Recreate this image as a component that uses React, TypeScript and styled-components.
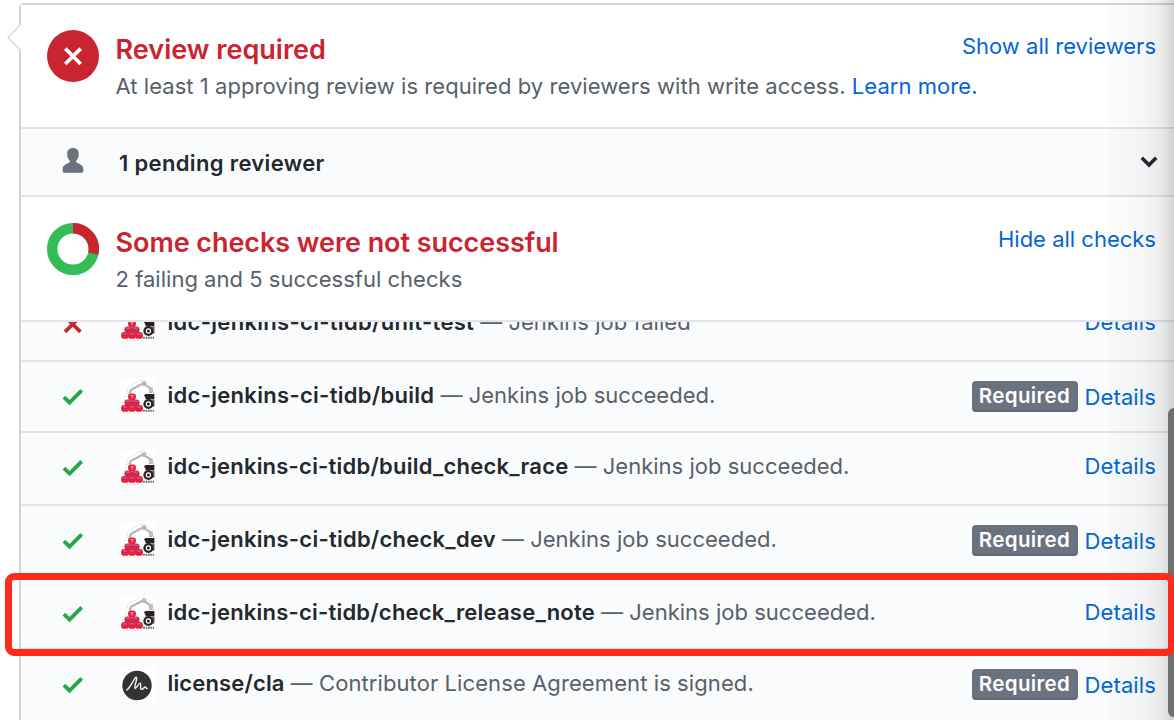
import React from "react";
import styled, { createGlobalStyle } from "styled-components";

const GlobalStyle = createGlobalStyle`
  * { box-sizing: border-box; }
  body { margin: 0; background: #fff; overflow: hidden; }
`;

const Page = styled.main`
  position: relative;
  width: 1174px;
  height: 720px;
  overflow: hidden;
  padding: 3px 0 0 19px;
  background: #fff;
  font-family: Inter, "Liberation Sans", sans-serif;
  font-size: 22px;
  line-height: 32px;
  color: #24292e;
`;

const Card = styled.section`
  height: 740px;
  border: 2px solid #d1d5da;
  border-right: 0;
  border-radius: 5px 0 0 0;
`;

const CardArrow = styled.svg`
  position: absolute;
  left: 6px;
  top: 22px;
`;

const StatusSection = styled.header<{ $height: number; $top: number }>`
  display: flex;
  height: ${(p) => p.$height}px;
  padding: ${(p) => p.$top}px 18px 0 26px;
  border-bottom: 2px solid #e1e4e8;
  background: #fff;
`;

const StatusBadge = styled.svg`
  flex: none;
`;

const StatusText = styled.div`
  flex: 1;
  min-width: 0;
  margin-left: 16.5px;
  padding-top: 1px;
  white-space: nowrap;
`;

const Title = styled.h2<{ $spacing: number }>`
  margin: 0;
  font-size: 27px;
  line-height: 38px;
  font-weight: 600;
  letter-spacing: ${(p) => p.$spacing}px;
  color: #cb2431;
`;

const Subtitle = styled.p<{ $spacing: number }>`
  margin: 1px 0 0;
  line-height: 32px;
  letter-spacing: ${(p) => p.$spacing}px;
  color: #586069;
`;

const Link = styled.a`
  color: #0366d6;
  white-space: nowrap;
`;

const DetailsLink = styled(Link)`
  letter-spacing: 0.12px;
`;

const PendingRow = styled.div`
  display: flex;
  align-items: center;
  height: 68px;
  padding: 0 16px 0 41px;
  border-bottom: 2px solid #e1e4e8;
  background: #fafbfc;
`;

const PersonIcon = styled.svg`
  flex: none;
  margin-bottom: 2px;
`;

const PendingLabel = styled.strong`
  flex: 1;
  margin: 1px 0 0 35px;
  font-weight: 600;
  letter-spacing: 0.35px;
`;

const CheckList = styled.div`
  height: 400px;
  overflow: hidden;
  background: #fafbfc;
`;

const CheckTrack = styled.div`
  margin-top: -33px;
`;

const CheckRow = styled.div<{ $height: number }>`
  display: flex;
  align-items: flex-start;
  height: ${(p) => p.$height}px;
  padding: 17px 18px 0 41px;
  border-bottom: 2px solid #e1e4e8;
`;

const StateIcon = styled.svg`
  flex: none;
  margin-top: 8px;
`;

const Avatar = styled.svg`
  flex: none;
  margin: 0 12.5px 0 36px;
`;

const CheckText = styled.div`
  flex: 1;
  display: flex;
  white-space: pre;
`;

const CheckName = styled.strong<{ $spacing: number }>`
  font-weight: 600;
  letter-spacing: ${(p) => p.$spacing}px;
`;

const CheckDescription = styled.span<{ $spacing: number }>`
  margin-left: 6px;
  color: #586069;
  letter-spacing: ${(p) => p.$spacing}px;
`;

const RowActions = styled.div<{ $required?: boolean }>`
  display: flex;
  align-items: flex-start;
  gap: 7px;
  padding-top: ${(p) => (p.$required ? 2 : 0)}px;
`;

const RequiredBadge = styled.span`
  width: 106px;
  height: 31px;
  text-align: center;
  border-radius: 4px;
  background: #6a737d;
  box-shadow: inset 0 -2px 0 rgba(27, 31, 35, 0.12);
  color: #fff;
  font-size: 20.5px;
  letter-spacing: 0.35px;
  line-height: 29px;
  font-weight: 600;
`;

const EdgeShadow = styled.div`
  position: absolute;
  top: 0;
  right: 0;
  width: 66px;
  height: 720px;
  background: linear-gradient(to right, rgba(0, 0, 0, 0.008), rgba(0, 0, 0, 0.03) 50%, rgba(0, 0, 0, 0.07) 80%, rgba(0, 0, 0, 0.17));
`;

const ScrollThumb = styled.div`
  position: absolute;
  left: 1168px;
  top: 408px;
  width: 12px;
  height: 309px;
  border-radius: 6px;
  background: #707070;
`;

const Highlight = styled.div`
  position: absolute;
  left: 5px;
  top: 573px;
  width: 1170px;
  height: 83px;
  border: 7px solid #ff2a1c;
  border-radius: 9px;
`;

const FailBadge = () => (
  <StatusBadge width="52" height="52" viewBox="0 0 52 52">
    <circle cx="26" cy="26" r="26" fill="#cb2431" />
    <path d="M18.3 18.6L33.7 34M33.7 18.6L18.3 34" stroke="#fff" strokeWidth="3.7" />
  </StatusBadge>
);

const Donut = () => (
  <StatusBadge width="52" height="52" viewBox="0 0 52 52">
    <circle cx="26" cy="26" r="20.8" fill="none" stroke="#34bd56" strokeWidth="10.4" />
    <path d="M26 5.2A20.8 20.8 0 0 1 46.3 30.6" fill="none" stroke="#cb2431" strokeWidth="10.4" />
  </StatusBadge>
);

const Person = () => (
  <PersonIcon width="22" height="26" viewBox="0 0 22 26">
    <path
      d="M11 0C7.4 0 5.2 2.2 5.2 5.8c0 3.1 1 5.6 2.7 7.1v1.4c-3 1.6-7.2 2.6-7.2 7V23c0 1.2.6 1.8 1.8 1.8h17c1.2 0 1.8-.6 1.8-1.8v-1.7c0-4.4-4.2-5.4-7.2-7v-1.4c1.7-1.5 2.7-4 2.7-7.1C16.8 2.2 14.6 0 11 0z"
      fill="#6a737d"
    />
  </PersonIcon>
);

const Chevron = () => (
  <svg width="18" height="14" viewBox="0 0 18 14">
    <path d="M1.8 2.8L9 10L16.2 2.8" fill="none" stroke="#24292e" strokeWidth="3.5" />
  </svg>
);

const Check = () => (
  <StateIcon width="22" height="20" viewBox="0 0 22 20">
    <path d="M1.9 10.2L7.6 15.7L19.7 3.4" fill="none" stroke="#28a745" strokeWidth="3.8" />
  </StateIcon>
);

const Cross = () => (
  <StateIcon width="22" height="20" viewBox="0 0 22 20">
    <path d="M3 2.5L18.4 17.9M18.4 2.5L3 17.9" fill="none" stroke="#cb2431" strokeWidth="3.7" />
  </StateIcon>
);

const barrels = [
  [12, 17.8],
  [8.4, 23.8],
  [15.6, 23.8],
  [5, 29.4],
  [12, 29.4],
  [19, 29.4],
];

const JenkinsAvatar = () => (
  <Avatar width="35" height="35" viewBox="0 0 35 35">
    <rect width="35" height="35" rx="4" fill="#fff" />
    <path d="M2 25L6.5 15L8 8L19 2L24 0.7L29 4L34 9M3 34.3H22" fill="none" stroke="#d0d0d0" strokeWidth=".8" strokeDasharray="2 1.5" />
    <path d="M9.5 14.5L11 10.8L23 4.5L31 9.5V14" fill="none" stroke="#b3b5b7" strokeWidth="2.2" />
    <circle cx="24" cy="4.6" r="2.3" fill="#b8b8b8" />
    <circle cx="31" cy="10.8" r="2.2" fill="#b8b8b8" />
    <path d="M28.5 14.5L31 11L34 14.5" fill="none" stroke="#c4c4c4" strokeWidth="1.2" />
    {barrels.map(([x, y]) => (
      <g key={`${x}-${y}`}>
        <rect x={x - 3.9} y={y - 3.3} width="7.8" height="6.6" rx="2.8" fill="#e6213d" />
        {y > 20 && <ellipse cx={x} cy={y - 1.6} rx="2.4" ry=".9" fill="#8b6fae" />}
      </g>
    ))}
    <path d="M10.6 16.7h3M12.2 16.7v2.8" stroke="#f7a5b0" strokeWidth=".9" />
    <path d="M24 16l2-1h8.4v5.200h-8.400z" fill="#2c2321" />
    <path d="M31.5 20.5h3v7h-3z" fill="#6b625e" />
    <circle cx="28.400" cy="25" r="3.900" fill="#fff" stroke="#2c2321" strokeWidth="2.400" />
    <circle cx="28.400" cy="25" r="1.500" fill="#2c2321" />
    <path d="M23 31.800H34" stroke="#756d6a" strokeWidth="2" strokeDasharray="1.800 .7" />
  </Avatar>
);

const ClaAvatar = () => (
  <Avatar width="35" height="35" viewBox="0 0 35 35">
    <rect width="35" height="35" rx="4" fill="#fff" />
    <circle cx="17" cy="18.5" r="14.7" fill="#333" />
    <path
      d="M6.8 23C10 20.5 12.5 15 15.2 10.8C16.9 9 17 11.5 16 15C14.9 18.5 14.4 21.5 15.2 21.5C16.6 21.5 18.8 15.7 20.3 16.2C21.5 16.8 19.5 22.4 21.5 22.4C23.5 22.5 23.8 19.9 25 20C26 20.1 25.6 21.7 27.2 21.4"
      fill="none"
      stroke="#f4f4f4"
      strokeWidth="1.4"
      strokeLinecap="round"
    />
  </Avatar>
);

interface CheckItem {
  name: string;
  description: string;
  height: number;
  nameSpacing: number;
  descriptionSpacing: number;
  failed?: boolean;
  required?: boolean;
  cla?: boolean;
}

const checks: CheckItem[] = [
  { name: "idc-jenkins-ci-tidb/unit-test", description: "Jenkins job failed", height: 73, nameSpacing: 0.31, descriptionSpacing: 0.02, failed: true },
  { name: "idc-jenkins-ci-tidb/build", description: "Jenkins job succeeded.", height: 71, nameSpacing: 0.3, descriptionSpacing: 0.02, required: true },
  { name: "idc-jenkins-ci-tidb/build_check_race", description: "Jenkins job succeeded.", height: 73, nameSpacing: 0.23, descriptionSpacing: 0.02 },
  { name: "idc-jenkins-ci-tidb/check_dev", description: "Jenkins job succeeded.", height: 73, nameSpacing: 0.25, descriptionSpacing: 0.02, required: true },
  { name: "idc-jenkins-ci-tidb/check_release_note", description: "Jenkins job succeeded.", height: 71, nameSpacing: 0.22, descriptionSpacing: 0.02 },
  { name: "license/cla", description: "Contributor License Agreement is signed.", height: 73, nameSpacing: 0.15, descriptionSpacing: 0.09, required: true, cla: true },
];

export default function App() {
  return (
    <Page>
      <GlobalStyle />
      <Card>
        <StatusSection $height={124} $top={25}>
          <FailBadge />
          <StatusText>
            <Title $spacing={0.02}>Review required</Title>
            <Subtitle $spacing={0.055}>
              At least 1 approving review is required by reviewers with write access. <Link>Learn more.</Link>
            </Subtitle>
          </StatusText>
          <Link>Show all reviewers</Link>
        </StatusSection>
        <PendingRow>
          <Person />
          <PendingLabel>1 pending reviewer</PendingLabel>
          <Chevron />
        </PendingRow>
        <StatusSection $height={125} $top={26}>
          <Donut />
          <StatusText>
            <Title $spacing={-0.06}>Some checks were not successful</Title>
            <Subtitle $spacing={0.02}>2 failing and 5 successful checks</Subtitle>
          </StatusText>
          <Link>Hide all checks</Link>
        </StatusSection>
        <CheckList>
          <CheckTrack>
            {checks.map((check) => (
              <CheckRow key={check.name} $height={check.height}>
                {check.failed ? <Cross /> : <Check />}
                {check.cla ? <ClaAvatar /> : <JenkinsAvatar />}
                <CheckText>
                  <CheckName $spacing={check.nameSpacing}>{check.name}</CheckName>
                  <CheckDescription $spacing={check.descriptionSpacing}>— {check.description}</CheckDescription>
                </CheckText>
                <RowActions $required={check.required}>
                  {check.required && <RequiredBadge>Required</RequiredBadge>}
                  <DetailsLink>Details</DetailsLink>
                </RowActions>
              </CheckRow>
            ))}
          </CheckTrack>
        </CheckList>
      </Card>
      <CardArrow width="16" height="32" viewBox="0 0 16 32">
        <path d="M15 3L2 15.5L15 28Z" fill="#fff" />
        <path d="M14.5 2.5L2 15.5L14.5 28" fill="none" stroke="#d9dce0" strokeWidth="1.7" />
      </CardArrow>
      <EdgeShadow />
      <ScrollThumb />
      <Highlight />
    </Page>
  );
}
